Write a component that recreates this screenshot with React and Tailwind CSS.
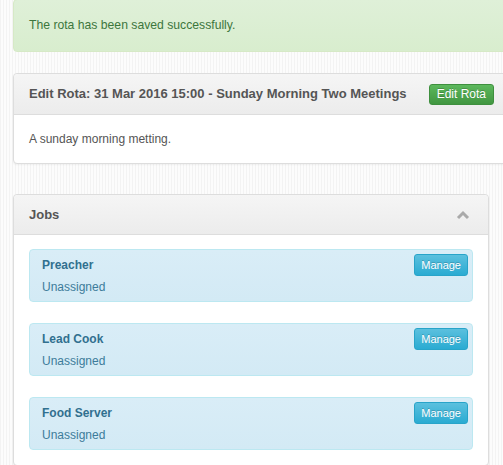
import React from "react";

const jobs = [
  { id: 1, name: "Preacher", status: "Unassigned" },
  { id: 2, name: "Lead Cook", status: "Unassigned" },
  { id: 3, name: "Food Server", status: "Unassigned" },
];

const App = () => {
  return (
    <div
      className="w-[503px] h-[465px] overflow-hidden bg-[#fcfcfc] bg-[repeating-linear-gradient(90deg,#f3f3f3_0px,#f3f3f3_1px,transparent_1px,transparent_3px)] pl-[13px] text-[12px] text-[#555]"
      style={{ fontFamily: '"Liberation Sans", Arial, sans-serif' }}
    >
      <div className="w-[497px] h-[53px] -mt-px flex items-center pl-[15px] border border-[#d6e9c6] rounded bg-[linear-gradient(#dff0d8,#d8edce)] text-[#3c763d] text-[12.2px]">
        The rota has been saved successfully.
      </div>

      <div className="w-[497px] mt-[21px] border border-[#ddd] rounded bg-white shadow-[0_1px_2px_rgba(0,0,0,0.05)]">
        <div className="h-[41px] flex items-center justify-between px-[15px] border-b border-[#ddd] rounded-t bg-[linear-gradient(#f5f5f5,#ececec)]">
          <h3 className="text-[13px] font-bold text-[#555]">
            Edit Rota: 31 Mar 2016 15:00 - Sunday Morning Two Meetings
          </h3>
          <button className="h-[21px] px-[7px] rounded-[3px] border border-[#3e8f3e] bg-[linear-gradient(#5cb85c,#419641)] text-white text-[12px] [text-shadow:0_-1px_0_rgba(0,0,0,0.2)]">
            Edit Rota
          </button>
        </div>
        <div className="h-[48px] flex items-center px-[15px]">
          A sunday morning metting.
        </div>
      </div>

      <div className="w-[476px] mt-[30px] border border-[#ddd] rounded bg-white shadow-[0_1px_2px_rgba(0,0,0,0.05)]">
        <div className="h-[40px] flex items-center justify-between px-[15px] border-b border-[#ddd] rounded-t bg-[linear-gradient(#f5f5f5,#ececec)]">
          <h3 className="text-[13px] font-bold text-[#555]">Jobs</h3>
          <svg width="14" height="10" viewBox="0 0 14 10" className="mr-[3px]">
            <path d="M2 8 L7 3 L12 8" fill="none" stroke="#aaa" strokeWidth="3" />
          </svg>
        </div>
        <div className="flex flex-col gap-[21px] px-[15px] pt-[14px] pb-[15px]">
          {jobs.map((job) => (
            <div
              key={job.id}
              className="h-[53px] flex justify-between pl-[12px] pr-[4px] pt-[4px] border border-[#bce8f1] rounded bg-[linear-gradient(#d9edf7,#d3eaf5)] text-[#31708f]"
            >
              <div className="pt-[3px]">
                <div className="text-[12px] font-bold leading-[16px]">{job.name}</div>
                <div className="text-[12px] leading-[16px] mt-[6px] text-[#3d7c9a]">{job.status}</div>
              </div>
              <button className="h-[22px] px-[6px] rounded-[3px] border border-[#28a4c9] bg-[linear-gradient(#5bc0de,#2aabd2)] text-white text-[11px] [text-shadow:0_-1px_0_rgba(0,0,0,0.2)]">
                Manage
              </button>
            </div>
          ))}
        </div>
      </div>
    </div>
  );
};

export default App;
